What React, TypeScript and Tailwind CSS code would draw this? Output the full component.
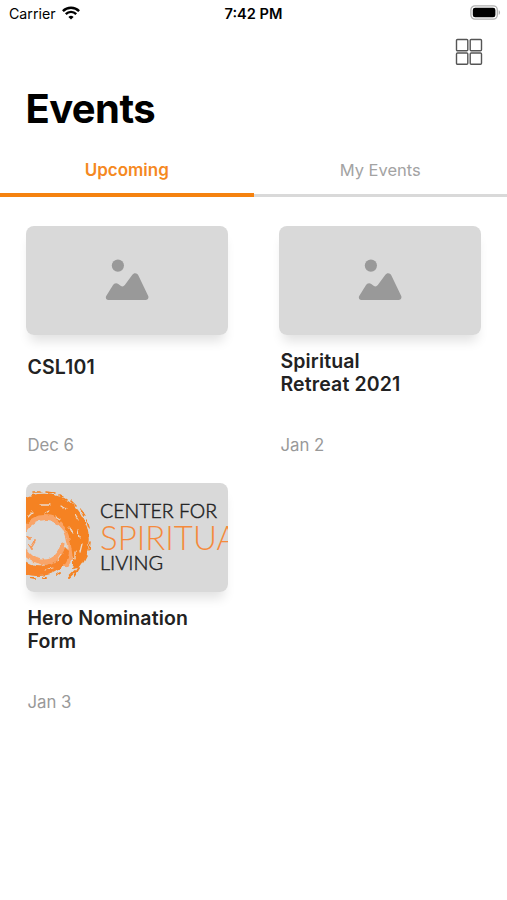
type EventItem = { title: string; date: string; logo?: boolean; single?: boolean };

const EVENTS: EventItem[] = [
  { title: 'CSL101', date: 'Dec 6', single: true },
  { title: 'Spiritual\nRetreat 2021', date: 'Jan 2' },
  { title: 'Hero Nomination Form', date: 'Jan 3', logo: true },
];

function WifiIcon() {
  return (
    <svg viewBox="0 0 18 14" className="-mt-0.5 w-[18px] h-[14px]" fill="none" stroke="#000" strokeWidth="2.4">
      <path d="M.9 5.1a11.4 11.4 0 0 1 16.2 0" />
      <path d="M3.8 8.1a7.3 7.3 0 0 1 10.4 0" />
      <path d="M9 13.6 6.4 11a3.7 3.7 0 0 1 5.2 0Z" fill="#000" stroke="none" />
    </svg>
  );
}

function BatteryIcon() {
  return (
    <svg viewBox="0 0 31 15" className="-mt-[3px] w-[31px] h-[15px]">
      <rect x=".9" y=".9" width="26.4" height="13.2" rx="4" fill="#fff" stroke="#b0b0b0" strokeWidth="1.3" />
      <rect x="2.8" y="2.8" width="22.6" height="9.4" rx="2.3" />
      <path d="M28.7 5.2c1.8.7 1.8 3.9 0 4.6Z" fill="#b0b0b0" />
    </svg>
  );
}

function GridIcon() {
  return (
    <svg viewBox="0 0 28 28" className="w-7 h-7" fill="none" stroke="#555" strokeWidth="1.4">
      <rect x="1.5" y="1.5" width="11.3" height="11.3" rx="1" />
      <rect x="15.2" y="1.5" width="11.3" height="11.3" rx="1" />
      <rect x="1.5" y="15" width="11.3" height="11.3" rx="1" />
      <rect x="15.2" y="15" width="11.3" height="11.3" rx="1" />
    </svg>
  );
}

function PlaceholderIcon() {
  return (
    <svg viewBox="0 0 44 42" className="w-11 h-[42px]" fill="#999">
      <circle cx="12.9" cy="6.6" r="6.1" />
      <path d="M3.3 41h37.2c2.4 0 3.6-2.1 2.6-4.2L33.4 16.5c-1.3-2.7-4.4-3-6.2-.6L19.8 26c-1.2 1.6-2.7 1.8-4.2.7l-2.3-1.6c-1.9-1.4-4.3-.9-5.4 1.2L1.2 37c-1 2 .1 4 2.1 4Z" />
    </svg>
  );
}

function LogoBanner() {
  return (
    <svg viewBox="0 0 202 109" className="w-full h-full">
      <defs>
        <filter id="rough" x="-20%" y="-20%" width="140%" height="140%">
          <feTurbulence type="fractalNoise" baseFrequency="0.14" numOctaves="2" seed="7" result="n" />
          <feDisplacementMap in="SourceGraphic" in2="n" scale="5" xChannelSelector="R" yChannelSelector="G" />
        </filter>
      </defs>
      <g filter="url(#rough)" fill="none" strokeLinecap="round">
        {/* Pale inner strokes */}
        <path d="M-4 49C2 39 12 33 22 34s18 9 21 20 2 20-3 27" stroke="#f9a467" strokeWidth="6" />
        <path d="M-4 64c4 10 13 15 22 15 10 0 17-7 19-18" stroke="#f9a467" strokeWidth="5" />
        <path d="M3 61l3 5M2 54l2 1M9 58l-3 5" stroke="#f79a5a" strokeWidth="2" />
        {/* Outer arm, over the top and down the right */}
        <path
          d="M-6 17C3 12 12 10 21 11c17 1 29 11 35 22 6 10 8 20 6 32-1 7-5 14-10 20l-6 1c2-6 1-12 0-18-1-9-3-18-8-25-5-8-12-11-20-11S3 36-6 46Z"
          fill="#f58220"
        />
        {/* Lower arm */}
        <path d="M-6 74c7 7 15 9 24 8 11-1 18-8 21-18l4 4c0 9-6 17-14 21-9 5-23 5-35 1Z" fill="#f7842a" />
        {/* Loose bristles on the rim */}
        <path d="M8 9h6M20 9l9 1M33 12l7 4M44 17l6 6M55 27l4 6M61 38l2 7M64 60l-1 7M60 73l-3 6" stroke="#f58220" strokeWidth="1.6" />
        <path d="M53 85l-5 8M49 88l-7 7M34 90l-3 2M21 95h-4M9 96l-5-1" stroke="#f58220" strokeWidth="2" />
        {/* Gaps showing the card through the paint */}
        <path d="M14 22h10M3 33l4-4M18 31l5-3M35 23l6 4M29 33l5 3M49 32l3 5M43 44l3 6M52 47l1 7M56 61l-2 8M49 69v6" stroke="#ebd9cb" strokeWidth="1.3" />
        <path d="M6 79l7 2M18 87l9-2M31 78l4-6M41 60l1 5" stroke="#ebd0bb" strokeWidth="1.2" />
      </g>
      <g className="font-['Lato',sans-serif]" fontWeight="300">
        <text x="74" y="35" fontSize="19.5" fill="#222" stroke="#222" strokeWidth=".45" textLength="117" lengthAdjust="spacingAndGlyphs">CENTER FOR</text>
        <text x="74" y="66.5" fontSize="34" fill="#f58a3c" textLength="138" lengthAdjust="spacingAndGlyphs">SPIRITUA</text>
        <text x="74" y="87" fontSize="19.5" fill="#222" stroke="#222" strokeWidth=".45" textLength="63" lengthAdjust="spacingAndGlyphs">LIVING</text>
      </g>
    </svg>
  );
}

function EventCard({ event }: { event: EventItem }) {
  return (
    <div className="h-[257px]">
      <div className="rounded-lg shadow-[0_10px_12px_-4px_rgba(0,0,0,0.12)]">
        <div className="h-[109px] rounded-lg overflow-hidden bg-[#d9d9d9] flex items-center justify-center">
          {event.logo ? <LogoBanner /> : <PlaceholderIcon />}
        </div>
      </div>
      <div className={`h-[85px] pl-px ${event.single ? 'pt-[21px]' : 'pt-[15px]'}`}>
        <h2 className="w-[170px] whitespace-pre-line text-[19.5px] leading-[23px] tracking-[0.15px] font-semibold text-[#222]">
          {event.title}
        </h2>
      </div>
      <p className="pl-px pt-[15px] text-[16.8px] leading-5 text-[#999]">{event.date}</p>
    </div>
  );
}

export default function App() {
  return (
    <div className="w-full h-[900px] bg-white overflow-hidden font-['Inter',sans-serif] text-black">
      <div className="h-7 grid grid-cols-3 items-center pl-[9px] pr-[6px]">
        <div className="flex items-center gap-1.5 text-[14.2px]">
          <span>Carrier</span>
          <WifiIcon />
        </div>
        <span className="-ml-[3px] pt-px text-center text-[14.6px] font-semibold">7:42 PM</span>
        <div className="flex justify-end"><BatteryIcon /></div>
      </div>

      <header className="h-[116px]">
        <div className="flex justify-end pt-[10px] pr-6"><GridIcon /></div>
        <h1 className="pl-[25.5px] pt-[19px] text-[40px] leading-[48px] tracking-[-0.6px] font-bold">Events</h1>
      </header>

      <div className="h-[53px] grid grid-cols-2 text-center text-[17px] leading-[52px]">
        <button className="h-[53px] border-b-4 border-[#f5820f] text-[#f5891f] font-semibold">Upcoming</button>
        <button className="h-[53px] border-b-[3px] border-[#d9d9d9] text-[16.5px] text-[#a3a3a3]">My Events</button>
      </div>

      <main className="grid grid-cols-[202px_202px] gap-x-[51px] pl-[26.4px] pt-[28.5px]">
        {EVENTS.map((e) => (
          <EventCard key={e.title} event={e} />
        ))}
      </main>
    </div>
  );
}
